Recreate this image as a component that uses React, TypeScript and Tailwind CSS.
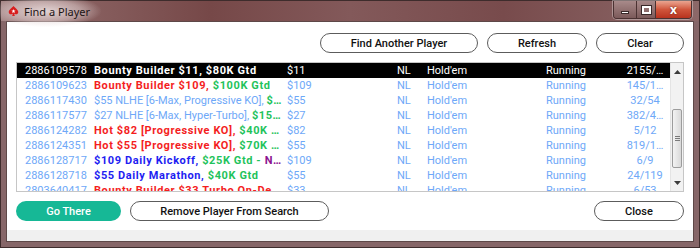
import React from "react";

type Seg = { t: string; c: string; b?: boolean };
type Row = { id: string; segs: Seg[]; buy: string; ent: string };

const LB = "text-[#6ea8f8]";
const RED = "text-[#f41e1e]";
const GRN = "text-[#1fc35c]";
const BLU = "text-[#1e1ef2]";
const PUR = "text-[#8c1390]";

const rows: Row[] = [
  { id: "2886109578", segs: [{ t: "Bounty Builder $11, $80K Gtd", c: "", b: true }], buy: "$11", ent: "2155/…" },
  {
    id: "2886109623",
    segs: [
      { t: "Bounty Builder $109, ", c: RED, b: true },
      { t: "$100K Gtd", c: GRN, b: true },
    ],
    buy: "$109",
    ent: "145/1…",
  },
  {
    id: "2886117430",
    segs: [
      { t: "$55 NLHE [6-Max, Progressive KO], ", c: LB },
      { t: "$…", c: GRN, b: true },
    ],
    buy: "$55",
    ent: "32/54",
  },
  {
    id: "2886117577",
    segs: [
      { t: "$27 NLHE [6-Max, Hyper-Turbo], ", c: LB },
      { t: "$15…", c: GRN, b: true },
    ],
    buy: "$27",
    ent: "382/4…",
  },
  {
    id: "2886124282",
    segs: [
      { t: "Hot $82 [Progressive KO], ", c: RED, b: true },
      { t: "$40K …", c: GRN, b: true },
    ],
    buy: "$82",
    ent: "5/12",
  },
  {
    id: "2886124351",
    segs: [
      { t: "Hot $55 [Progressive KO], ", c: RED, b: true },
      { t: "$70K …", c: GRN, b: true },
    ],
    buy: "$55",
    ent: "819/1…",
  },
  {
    id: "2886128717",
    segs: [
      { t: "$109 Daily Kickoff, ", c: BLU, b: true },
      { t: "$25K Gtd - ", c: GRN, b: true },
      { t: "N…", c: PUR, b: true },
    ],
    buy: "$109",
    ent: "6/9",
  },
  {
    id: "2886128718",
    segs: [
      { t: "$55 Daily Marathon, ", c: BLU, b: true },
      { t: "$40K Gtd", c: GRN, b: true },
    ],
    buy: "$55",
    ent: "24/119",
  },
  {
    id: "2803640417",
    segs: [{ t: "Bounty Builder $33 Turbo On-De…", c: RED, b: true }],
    buy: "$33",
    ent: "6/53",
  },
];

function SpadeIcon() {
  return (
    <svg width="11" height="12" viewBox="0 0 12 12">
      <path
        d="M6 0.5C4 3 0.8 4.5 0.8 7C0.8 8.8 2.2 9.8 3.6 9.6C4.4 9.5 5 9 5.3 8.6L4.6 11.4H7.4L6.7 8.6C7 9 7.6 9.5 8.4 9.6C9.8 9.8 11.2 8.8 11.2 7C11.2 4.5 8 3 6 0.5Z"
        fill="#d81e1e"
      />
      <polygon
        points="6,3.9 6.588,5.491 8.283,5.558 6.951,6.609 7.411,8.242 6,7.3 4.589,8.242 5.049,6.609 3.717,5.558 5.412,5.491"
        fill="#fff"
      />
    </svg>
  );
}

function CaptionButtons() {
  return (
    <div className="absolute right-[7px] top-0 flex h-[18px] rounded-b-[4px] border border-t-0 border-[#4b3232] overflow-hidden shadow-[0_0_0_1px_rgba(255,255,255,0.35)]">
      <div className="w-[23px] flex items-end justify-center pb-[4px] bg-gradient-to-b from-[#a88a8a] to-[#7c5a5a] border-r border-[#4b3232]">
        <div className="w-[8px] h-[3px] bg-white border border-[#3a2a2a]" />
      </div>
      <div className="w-[19px] flex items-center justify-center bg-gradient-to-b from-[#a88a8a] to-[#7c5a5a] border-r border-[#4b3232]">
        <div className="w-[9px] h-[8px] border-2 border-white outline outline-1 outline-[#3a2a2a]" />
      </div>
      <div className="w-[35px] flex items-center justify-center bg-gradient-to-b from-[#e9a490] via-[#d0553c] to-[#b8321e]">
        <span className="text-white text-[12px] font-bold leading-none font-['Noto_Sans',sans-serif] [text-shadow:0_0_2px_#5a1a10]">x</span>
      </div>
    </div>
  );
}

function Pill({ label, w, teal }: { label: string; w: string; teal?: boolean }) {
  return (
    <button
      className={`${w} h-[20px] rounded-full text-[11px] font-medium leading-none flex items-center justify-center ${
        teal ? "bg-[#16b896] text-white" : "bg-white border border-[#5c5c5c] text-[#111]"
      }`}
    >
      {label}
    </button>
  );
}

function Triangle({ up }: { up?: boolean }) {
  return (
    <svg width="7" height="4" viewBox="0 0 7 4">
      <polygon points={up ? "0,4 7,4 3.5,0" : "0,0 7,0 3.5,4"} fill="#3c3c3c" />
    </svg>
  );
}

function Scrollbar() {
  return (
    <div className="w-[13px] flex flex-col bg-[#f2f2f2] border-l border-[#e4e4e4]">
      <div className="h-[17px] flex items-center justify-center">
        <Triangle up />
      </div>
      <div className="flex-1">
        <div className="mt-[29px] h-[59px] mx-[1px] rounded-[2px] border border-[#9c9c9c] bg-gradient-to-r from-[#f3f3f3] to-[#d9d9d9] flex flex-col items-center justify-center gap-[1px]">
          <div className="w-[5px] h-px bg-[#7a7a7a]" />
          <div className="w-[5px] h-px bg-[#7a7a7a]" />
          <div className="w-[5px] h-px bg-[#7a7a7a]" />
        </div>
      </div>
      <div className="h-[17px] flex items-center justify-center">
        <Triangle />
      </div>
    </div>
  );
}

function ListRow({ row, selected }: { row: Row; selected?: boolean }) {
  const base = selected ? "text-white" : LB;
  return (
    <div className={`h-[15px] shrink-0 flex items-center whitespace-nowrap text-[11px] leading-[15px] ${selected ? "bg-black" : ""}`}>
      <div className={`pl-[8px] w-[77px] ${base}`}>{row.id}</div>
      <div className="w-[193px] overflow-hidden">
        {row.segs.map((s, i) => (
          <span key={i} className={`${selected ? "text-white" : s.c} ${s.b ? "font-bold tracking-[0.6px]" : ""}`}>
            {s.t}
          </span>
        ))}
      </div>
      <div className={`w-[110px] ${base}`}>{row.buy}</div>
      <div className={`w-[30px] ${base}`}>NL</div>
      <div className={`w-[119px] ${base}`}>Hold'em</div>
      <div className={`w-[79px] ${base}`}>Running</div>
      <div className={`w-[40px] text-center overflow-hidden ${base}`}>{row.ent}</div>
    </div>
  );
}

export default function App() {
  return (
    <div className="w-[700px] h-[248px] flex flex-col bg-[#866668] border border-[#3e2c2c] font-['Roboto',sans-serif]">
      {/* title bar */}
      <div className="relative h-[20px] shrink-0 bg-[linear-gradient(to_right,#a48585_0%,#8a6262_10%,#764848_30%,#83595a_50%,#784b4c_72%,#8c6868_100%)]">
        <div className="absolute left-[-10px] top-[-6px] w-[110px] h-[32px] bg-[radial-gradient(ellipse_at_center,rgba(240,228,228,0.85)_0%,rgba(230,215,215,0.5)_45%,transparent_72%)]" />
        <div className="relative flex items-center h-full pl-[7px] gap-[5px]">
          <SpadeIcon />
          <span className="text-[11px] text-[#1c1414] font-['Noto_Sans',sans-serif] leading-none">Find a Player</span>
        </div>
        <CaptionButtons />
      </div>

      {/* window body */}
      <div className="flex-1 flex flex-col px-[5px] pb-[5px]">
        <div className="flex-1 flex flex-col border border-[#5e4848] bg-[#f0f0f0]">
          <div className="h-[208px] bg-white flex flex-col px-[9px] pt-[11px]">
            <div className="flex justify-end gap-[9px]">
              <Pill label="Find Another Player" w="w-[158px]" />
              <Pill label="Refresh" w="w-[100px]" />
              <Pill label="Clear" w="w-[88px]" />
            </div>

            <div className="mt-[9px] h-[130px] flex border border-[#c6c6c6] overflow-hidden">
              <div className="flex-1 flex flex-col overflow-hidden">
                {rows.map((r, i) => (
                  <ListRow key={r.id} row={r} selected={i === 0} />
                ))}
              </div>
              <Scrollbar />
            </div>

            <div className="mt-[9px] flex gap-[9px]">
              <Pill label="Go There" w="w-[105px]" teal />
              <Pill label="Remove Player From Search" w="w-[199px]" />
              <div className="ml-auto">
                <Pill label="Close" w="w-[90px]" />
              </div>
            </div>
          </div>
        </div>
      </div>
    </div>
  );
}
